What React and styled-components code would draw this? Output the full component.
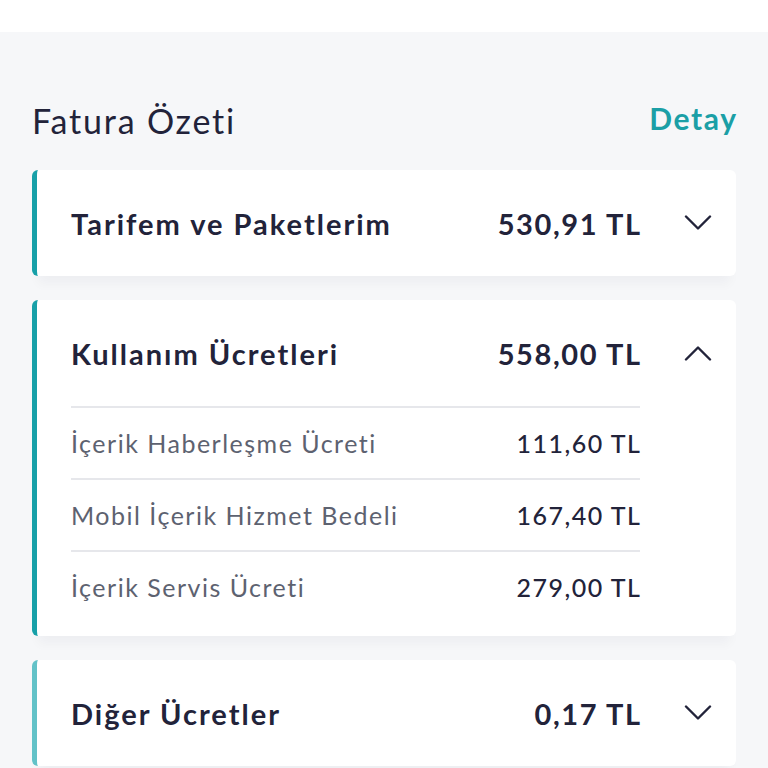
import React from 'react'
import styled, { createGlobalStyle } from 'styled-components'

const Global = createGlobalStyle`
  body {
    margin: 0;
    background: #f6f7f9;
    font-family: Lato, "Noto Sans", sans-serif;
    font-variant-ligatures: none;
    color: #22233a;
  }
`

const sections = [
  { title: 'Tarifem ve Paketlerim', total: '530,91 TL', open: false, accent: '#17a0a8' },
  {
    title: 'Kullanım Ücretleri',
    total: '558,00 TL',
    open: true,
    accent: '#17a0a8',
    items: [
      { label: 'İçerik Haberleşme Ücreti', amount: '111,60 TL' },
      { label: 'Mobil İçerik Hizmet Bedeli', amount: '167,40 TL' },
      { label: 'İçerik Servis Ücreti', amount: '279,00 TL' },
    ],
  },
  { title: 'Diğer Ücretler', total: '0,17 TL', open: false, accent: '#62c2c8' },
]

function Chevron({ up }) {
  return (
    <svg width="28" height="16" viewBox="0 0 28 16" fill="none">
      <path
        d={up ? 'M2 14.5 L14 2.5 L26 14.5' : 'M2 1.5 L14 13.5 L26 1.5'}
        stroke="#22233a"
        strokeWidth="2.4"
        strokeLinecap="round"
        strokeLinejoin="round"
      />
    </svg>
  )
}

function Card({ title, total, open, accent, items }) {
  return (
    <CardWrap accent={accent}>
      <Header>
        <CardTitle>{title}</CardTitle>
        <Total>{total}</Total>
        <Toggle>
          <Chevron up={open} />
        </Toggle>
      </Header>
      {open && items && (
        <Body>
          {items.map(it => (
            <Row key={it.label}>
              <RowLabel>{it.label}</RowLabel>
              <RowAmount>{it.amount}</RowAmount>
            </Row>
          ))}
        </Body>
      )}
    </CardWrap>
  )
}

export default function App() {
  return (
    <>
      <Global />
      <TopBar />
      <Page>
        <TitleRow>
          <PageTitle>Fatura Özeti</PageTitle>
          <DetailLink>Detay</DetailLink>
        </TitleRow>
        <List>
          {sections.map(s => (
            <Card key={s.title} {...s} />
          ))}
        </List>
      </Page>
    </>
  )
}

const TopBar = styled.div`
  height: 32px;
  background: #ffffff;
`

const Page = styled.div`
  padding: 64px 32px 40px;
`

const TitleRow = styled.div`
  height: 48px;
  display: flex;
  justify-content: space-between;
  align-items: center;
  margin-bottom: 26px;
`

const PageTitle = styled.h1`
  margin: 0;
  font-size: 34px;
  font-weight: 400;
  letter-spacing: 1.8px;
  color: #22233a;
`

const DetailLink = styled.a`
  font-size: 30px;
  font-weight: 700;
  letter-spacing: 1.6px;
  color: #1b9fa6;
  cursor: pointer;
  margin-top: -4px;
  margin-right: -1.6px;
`

const List = styled.div`
  display: flex;
  flex-direction: column;
  gap: 24px;
`

const CardWrap = styled.div`
  background: #ffffff;
  border-radius: 6px;
  border-left: 5px solid ${p => p.accent};
  box-shadow: 0 14px 10px -6px rgba(30, 40, 60, 0.035);
`

const Header = styled.div`
  height: 106px;
  display: flex;
  align-items: center;
  padding-left: 34px;
`

const CardTitle = styled.div`
  flex: 1;
  font-size: 29px;
  font-weight: 700;
  letter-spacing: 2px;
`

const Total = styled.div`
  font-size: 29px;
  font-weight: 700;
  letter-spacing: 1.6px;
  margin-right: -1.6px;
`

const Toggle = styled.div`
  width: 96px;
  padding-left: 44px;
  box-sizing: border-box;
  display: flex;
  align-items: center;
`

const Body = styled.div`
  margin: 0 96px 0 34px;
  padding-bottom: 14px;
`

const Row = styled.div`
  height: 70px;
  border-top: 2px solid #e6e7eb;
  display: flex;
  justify-content: space-between;
  align-items: center;
`

const RowLabel = styled.span`
  font-size: 25px;
  letter-spacing: 1.5px;
  color: #5d6270;
`

const RowAmount = styled.span`
  font-size: 25px;
  font-weight: 500;
  letter-spacing: 1.5px;
  margin-right: -1.5px;
  color: #22233a;
`
